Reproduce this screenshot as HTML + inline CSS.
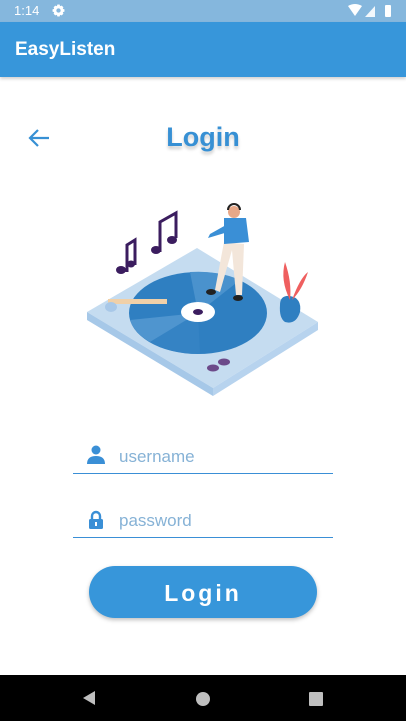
<!DOCTYPE html>
<html><head><style>
body{margin:0;width:406px;height:721px;position:relative;overflow:hidden;background:#fff;font-family:"Liberation Sans",Roboto,sans-serif}
.sb{position:absolute;top:0;left:0;width:406px;height:22px;background:#85b7dd;color:#fff;font-size:13px}
.ab{position:absolute;top:22px;left:0;width:406px;height:55px;background:#3796da;box-shadow:0 2px 3px rgba(0,0,0,.18)}
.ab span{position:absolute;left:15px;top:17px;color:#fff;font-size:19px;font-weight:bold}
.title{position:absolute;top:122px;left:0;width:406px;text-align:center;color:#3790d4;font-size:27px;font-weight:bold;text-shadow:0 3px 3px rgba(0,0,0,.2)}
.field{position:absolute;left:73px;width:260px;height:1px;background:#3a8fd6}
.ph{position:absolute;left:119px;color:#86b2d6;font-size:17px}
.btn{position:absolute;left:89px;top:566px;width:228px;height:52px;border-radius:26px;background:#3796da;box-shadow:0 2px 4px rgba(0,0,0,.25);color:#fff;font-size:23px;font-weight:bold;letter-spacing:3px;text-align:center;line-height:54px}
.nav{position:absolute;top:675px;left:0;width:406px;height:46px;background:#000}
</style></head><body>
<div class="sb"><span style="position:absolute;left:14px;top:3px">1:14</span>
<svg style="position:absolute;left:52px;top:4px" width="13" height="13" viewBox="0 0 24 24"><path fill="#fff" d="M12 8a4 4 0 1 0 0 8 4 4 0 0 0 0-8zM10 1h4l1 3 3-1 3 3-1 3 3 1v4l-3 1 1 3-3 3-3-1-1 3h-4l-1-3-3 1-3-3 1-3-3-1v-4l3-1-1-3 3-3 3 1z"/><circle cx="12" cy="12" r="3" fill="#85b7dd"/></svg>
<svg style="position:absolute;left:348px;top:4px" width="46" height="14" viewBox="0 0 46 14"><path fill="#fff" d="M0 2Q7-2 14 2L7 12z"/><path fill="#fff" d="M17 13L27 2V13z" opacity=".9"/><rect x="37" y="1" width="6" height="12" rx="1" fill="#fff"/></svg>
</div>
<div class="ab"><span>EasyListen</span></div>
<svg style="position:absolute;left:27px;top:127px" width="24" height="22" viewBox="0 0 24 22"><path d="M22 11H3M11 3L3 11l8 8" stroke="#3790d4" stroke-width="2.2" fill="none"/></svg>
<div class="title">Login</div>
<svg style="position:absolute;left:0;top:0" width="406" height="420">
<path d="M87 312L197 248 318 322 213 388z" fill="#c5dcf0"/>
<path d="M87 312L87 320 213 396 213 388z" fill="#a6c8e8"/>
<path d="M213 388L213 396 318 330 318 322z" fill="#b7d3ee"/>
<ellipse cx="198" cy="313" rx="69" ry="41" fill="#2f7fc1"/>
<path d="M198 313L130 320A69 41 0 0 0 150 342z" fill="#4f95cf"/>
<path d="M198 313L200 354A69 41 0 0 1 150 342z" fill="#3a86c6" opacity=".6"/>
<path d="M198 313L190 272A69 41 0 0 1 240 280z" fill="#4a92cd"/>
<ellipse cx="198" cy="312" rx="17" ry="10" fill="#fff"/>
<ellipse cx="198" cy="312" rx="5" ry="3" fill="#3b1d5f"/>
<rect x="108" y="299" width="59" height="5" fill="#f0d0a8"/>
<ellipse cx="111" cy="307" rx="6" ry="5" fill="#a8c8e8"/>
<ellipse cx="213" cy="368" rx="6" ry="3.5" fill="#6c4a8a"/>
<ellipse cx="224" cy="362" rx="6" ry="3.5" fill="#6c4a8a"/>
<path d="M280 305Q280 295 290 296Q302 298 300 312Q296 325 285 322Q279 318 280 305z" fill="#2f7fc1"/>
<path d="M290 300Q280 280 285 262Q292 282 290 300M292 300Q300 278 308 272Q302 290 292 300" fill="#ef5f5f"/>
<path d="M127 272V245L135 240V265" stroke="#3b1d5f" stroke-width="3" fill="none"/><ellipse cx="121" cy="270" rx="5" ry="4" fill="#3b1d5f"/><ellipse cx="131" cy="264" rx="4" ry="3.5" fill="#3b1d5f"/>
<path d="M160 252V222L176 213V238" stroke="#3b1d5f" stroke-width="3" fill="none"/><ellipse cx="156" cy="250" rx="5" ry="4" fill="#3b1d5f"/><ellipse cx="172" cy="240" rx="5" ry="4" fill="#3b1d5f"/>
<path d="M224 242L215 290 220 292 232 250 236 295 242 295 244 244z" fill="#f3e6da"/>
<path d="M224 218L246 218 249 242 224 244z" fill="#3a8fd6"/>
<path d="M226 225L210 234 208 238 228 232z" fill="#3a8fd6"/>
<circle cx="234" cy="212" r="6" fill="#e8a888"/>
<path d="M228 210A6 6 0 0 1 240 210" stroke="#222" stroke-width="2" fill="none"/>
<ellipse cx="211" cy="292" rx="5" ry="3" fill="#222"/><ellipse cx="238" cy="298" rx="5" ry="3" fill="#222"/>
</svg>
<svg style="position:absolute;left:86px;top:445px" width="20" height="20" viewBox="0 0 20 20"><circle cx="10" cy="5" r="4.5" fill="#3a8fd6"/><path d="M1 19Q1 11 10 11Q19 11 19 19z" fill="#3a8fd6"/></svg>
<div class="ph" style="top:447px">username</div>
<div class="field" style="top:473px"></div>
<svg style="position:absolute;left:88px;top:510px" width="16" height="20" viewBox="0 0 16 20"><path d="M4 9V6a4 4 0 0 1 8 0v3" stroke="#3a8fd6" stroke-width="2.4" fill="none"/><rect x="1" y="9" width="14" height="10" rx="1.5" fill="#3a8fd6"/><rect x="7" y="12" width="2" height="4" fill="#fff"/></svg>
<div class="ph" style="top:511px">password</div>
<div class="field" style="top:537px"></div>
<div class="btn">Login</div>
<div class="nav">
<svg style="position:absolute;left:80px;top:14px" width="18" height="18" viewBox="0 0 18 18"><path d="M15 2V16L3 9z" fill="#fff" opacity=".75"/></svg>
<div style="position:absolute;left:196px;top:17px;width:14px;height:14px;border-radius:50%;background:#fff;opacity:.75"></div>
<div style="position:absolute;left:309px;top:17px;width:14px;height:14px;background:#fff;opacity:.75;border-radius:1px"></div>
</div>
</body></html>
